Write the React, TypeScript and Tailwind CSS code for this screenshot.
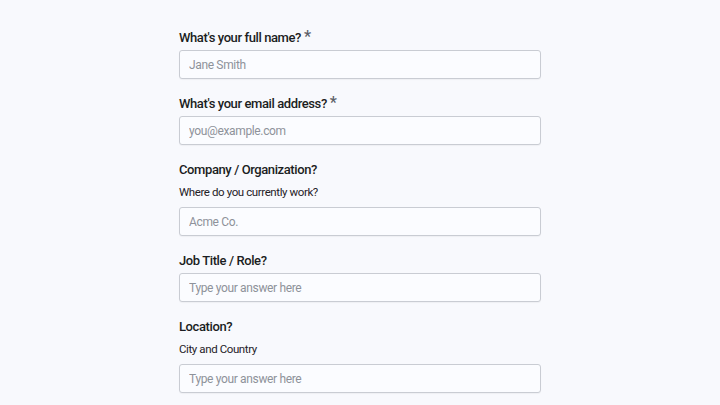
const FIELDS = [
  { label: "What's your full name?", required: true, placeholder: 'Jane Smith' },
  { label: "What's your email address?", required: true, placeholder: 'you@example.com' },
  { label: 'Company / Organization?', hint: 'Where do you currently work?', placeholder: 'Acme Co.' },
  { label: 'Job Title / Role?', placeholder: 'Type your answer here' },
  { label: 'Location?', hint: 'City and Country', placeholder: 'Type your answer here' },
];

export default function App() {
  return (
    <div className="min-h-screen bg-[#f8f9fd] font-['Roboto',sans-serif] text-[#1b1d22]">
      <form className="mx-auto flex w-[362px] flex-col gap-[15px] pt-[28px]">
        {FIELDS.map((f) => (
          <div key={f.label} className="flex flex-col">
            <label
              className={`flex items-start text-[13px] font-medium leading-[20px] tracking-[-0.4px] text-[#1b1d22] ${
                f.hint ? 'mb-[4px]' : 'mb-[2px]'
              }`}
            >
              {f.label}
              {f.required && (
                <span className="ml-[3px] text-[16px] leading-[18px] text-[#5c6068]">*</span>
              )}
            </label>
            {f.hint && (
              <p className="mb-[7px] text-[11.5px] leading-[16px] tracking-[-0.4px] text-[#1f2127]">{f.hint}</p>
            )}
            <input
              type="text"
              placeholder={f.placeholder}
              className="h-[29px] w-full rounded-[3px] border border-[#c9ccd3] bg-[#fbfcff] px-[9px] text-[12px] tracking-[-0.35px] text-[#1b1d22] shadow-[0_1px_1px_rgba(0,0,0,0.04)] outline-none placeholder:text-[#8e929a]"
            />
          </div>
        ))}
      </form>
    </div>
  );
}
